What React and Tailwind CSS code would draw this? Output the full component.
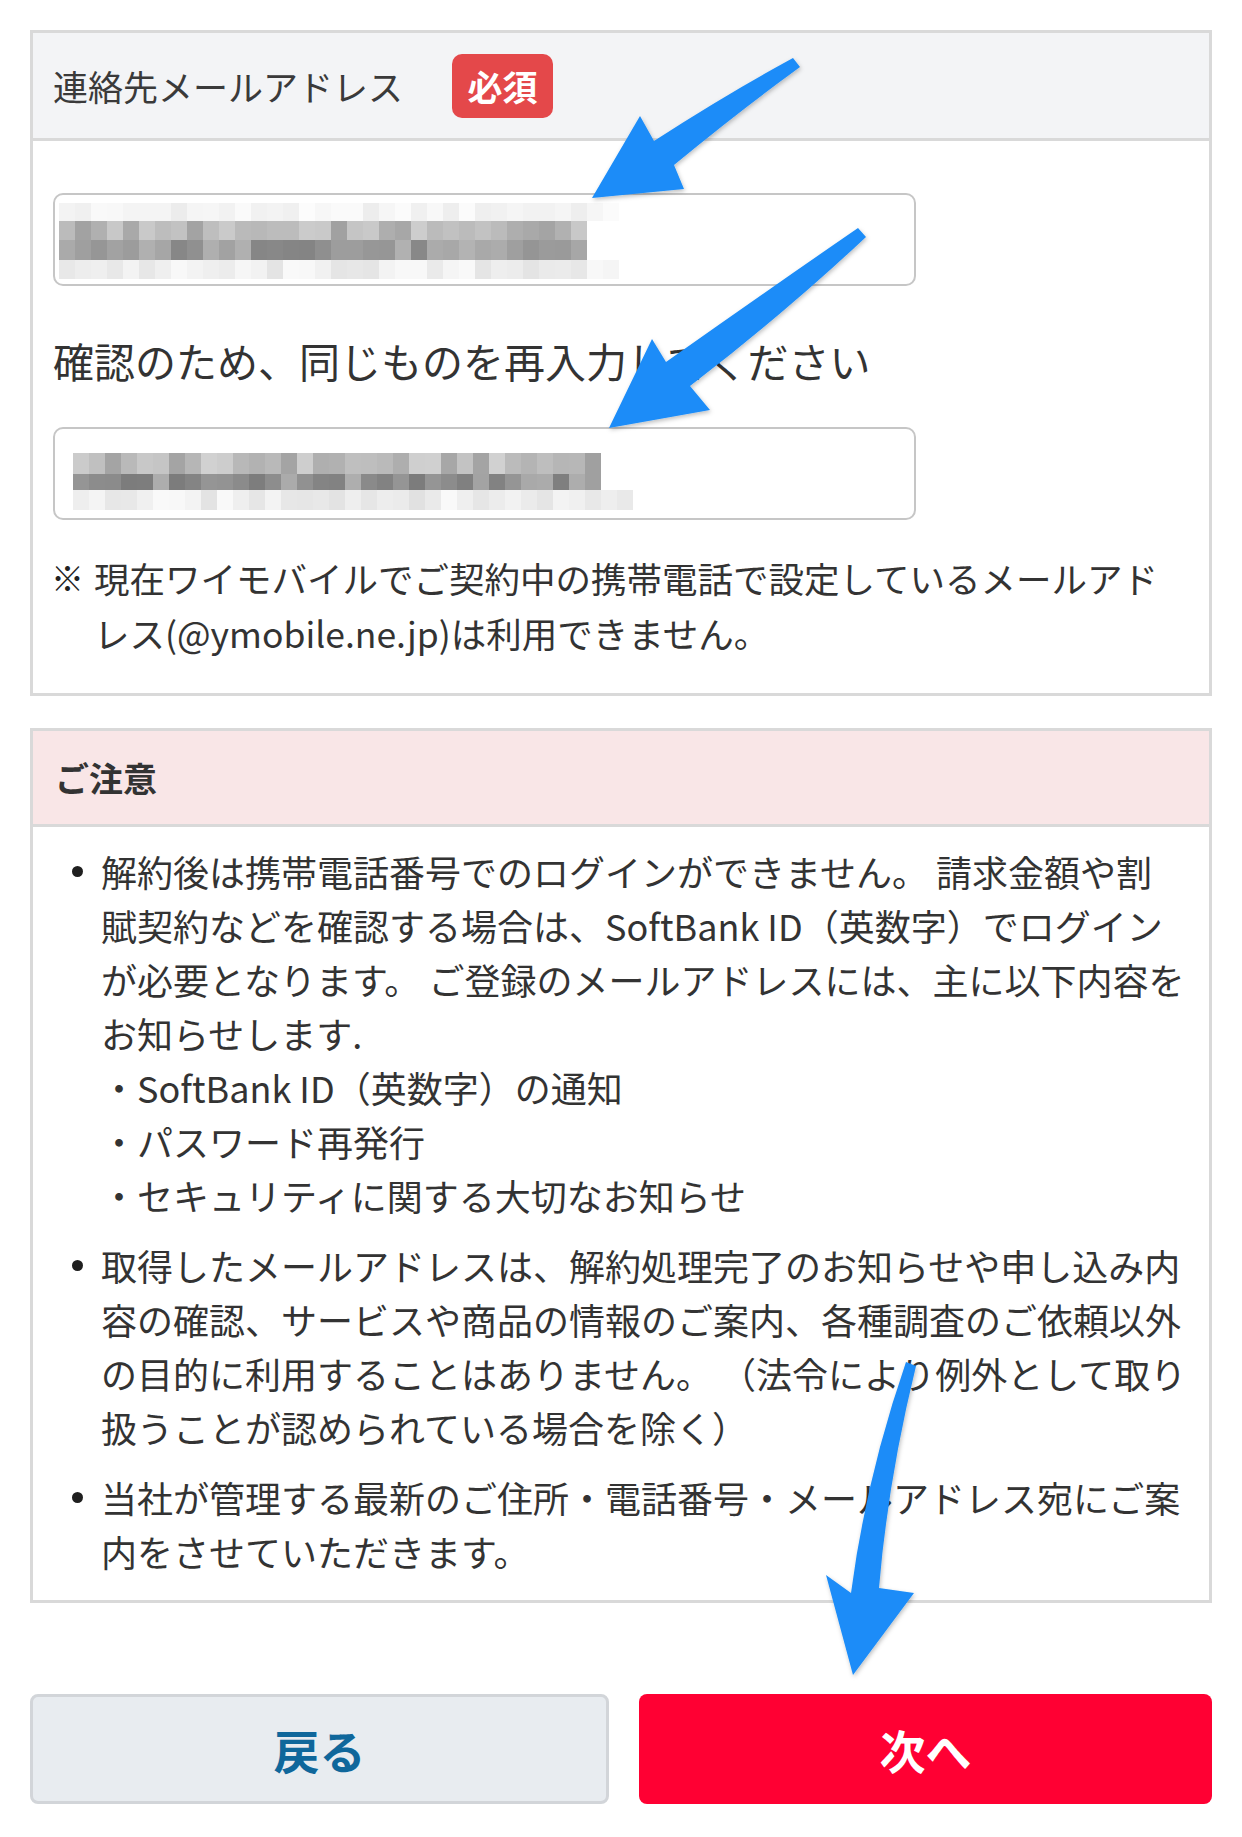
const noise = (seed) => {
  const x = Math.sin(seed * 12.9898 + 78.233) * 43758.5453;
  return x - Math.floor(x);
};

// pixelated (blurred) e-mail inside the input boxes
function MosaicInput({ rows, seed, className = "" }) {
  return (
    <div
      className={`h-[93px] w-[863px] overflow-hidden rounded-[10px] border-2 border-[#c6c6c6] bg-white ${className}`}
    >
      {rows.map((row, r) => (
        <div
          key={r}
          className="flex"
          style={{ marginLeft: row.left, marginTop: r === 0 ? row.top : 0 }}
        >
          {Array.from({ length: row.count }).map((_, c) => {
            const v = Math.round(row.min + noise(seed + r * 97 + c) * (row.max - row.min));
            return (
              <div
                key={c}
                className="w-[16px] shrink-0"
                style={{ height: row.h, backgroundColor: `rgb(${v},${v},${v})` }}
              />
            );
          })}
        </div>
      ))}
    </div>
  );
}

const firstRows = [
  { left: 4, top: 8, count: 35, min: 236, max: 252, h: 18 },
  { left: 4, count: 33, min: 160, max: 205, h: 19 },
  { left: 4, count: 33, min: 130, max: 180, h: 20 },
  { left: 4, count: 35, min: 226, max: 250, h: 19 },
];

const secondRows = [
  { left: 18, top: 24, count: 33, min: 160, max: 210, h: 21 },
  { left: 18, count: 33, min: 120, max: 175, h: 16 },
  { left: 18, count: 35, min: 225, max: 250, h: 20 },
];

const notices = [
  [
    "解約後は携帯電話番号でのログインができません。 請求金額や割",
    "賦契約などを確認する場合は、SoftBank ID（英数字）でログイン",
    "が必要となります。 ご登録のメールアドレスには、主に以下内容を",
    "お知らせします.",
    "・SoftBank ID（英数字）の通知",
    "・パスワード再発行",
    "・セキュリティに関する大切なお知らせ",
  ],
  [
    "取得したメールアドレスは、解約処理完了のお知らせや申し込み内",
    "容の確認、サービスや商品の情報のご案内、各種調査のご依頼以外",
    "の目的に利用することはありません。 （法令により例外として取り",
    "扱うことが認められている場合を除く）",
  ],
  [
    "当社が管理する最新のご住所・電話番号・メールアドレス宛にご案",
    "内をさせていただきます。",
  ],
];

function Arrows() {
  return (
    <svg
      className="pointer-events-none absolute left-0 top-0 h-[1837px] w-[1242px]"
      viewBox="0 0 1242 1837"
    >
      <defs>
        <filter id="arrowShadow" x="-20%" y="-20%" width="140%" height="140%">
          <feDropShadow dx="1" dy="2" stdDeviation="2" floodColor="#000" floodOpacity="0.25" />
        </filter>
      </defs>
      <g fill="#1b8cf8" filter="url(#arrowShadow)">
        <path d="M592 198 L640 116 L654 141 Q725 95 793 58 L800 67 Q738 112 674 165 L684 189 Z" />
        <path d="M609 428 L652 339 L666 362 Q765 292 858 228 L866 237 Q785 313 690 386 L710 410 Z" />
        <path d="M853 1675 L826 1575 L851 1593 Q866 1478 906 1362 L916 1366 Q888 1480 879 1588 L914 1593 Z" />
      </g>
    </svg>
  );
}

export default function App() {
  return (
    <div className="relative h-[1837px] w-[1242px] overflow-hidden bg-white px-[30px] pt-[30px] font-['Noto_Sans_CJK_JP','Noto_Sans',sans-serif] text-[#333]">
      <section className="border-[3px] border-[#d9d9d9]">
        <div className="flex h-[108px] items-center border-b-[3px] border-[#d9d9d9] bg-[#f3f4f6] pl-[20px]">
          <span className="text-[35px] leading-none text-[#3a3a3a]">連絡先メールアドレス</span>
          <span className="ml-[49px] flex h-[64px] w-[101px] items-center justify-center rounded-[10px] bg-[#e4484a] text-[35px] font-bold leading-none text-white">
            必須
          </span>
        </div>
        <div className="px-[20px] pb-[33px] pt-[52px]">
          <MosaicInput rows={firstRows} seed={3} />
          <p className="mt-[46px] text-[41px] leading-[56px]">確認のため、同じものを再入力してください</p>
          <MosaicInput rows={secondRows} seed={41} className="mt-[39px]" />
          <div className="mt-[30px] flex text-[35.5px] leading-[55px]">
            <span className="-ml-[2px] w-[43px] shrink-0 text-[33px] font-bold leading-[55px] text-[#222]">※</span>
            <p className="whitespace-nowrap">
              現在ワイモバイルでご契約中の携帯電話で設定しているメールアド
              <br />
              レス(@ymobile.ne.jp)は利用できません。
            </p>
          </div>
        </div>
      </section>

      <section className="mt-[32px] border-[3px] border-[#d9d9d9]">
        <div className="flex h-[96px] items-center border-b-[3px] border-[#d9d9d9] bg-[#f9e6e7] pl-[22px]">
          <h2 className="text-[34px] font-bold leading-none text-[#333]">ご注意</h2>
        </div>
        <ul className="flex flex-col gap-[16px] pb-[22px] pl-[39px] pt-[17px]">
          {notices.map((lines, i) => (
            <li key={i} className="flex">
              <span className="w-[29px] shrink-0">
                <span className="mt-[22px] block h-[11px] w-[11px] rounded-full bg-[#1f1f1f]" />
              </span>
              <p className="whitespace-nowrap text-[36px] leading-[54px]">
                {lines.map((line, j) => (
                  <span key={j} className="block">
                    {line}
                  </span>
                ))}
              </p>
            </li>
          ))}
        </ul>
      </section>

      <div className="mt-[91px] flex gap-[30px]">
        <button className="flex h-[110px] flex-1 items-center justify-center rounded-[8px] border-[3px] border-[#d2d5d9] bg-[#e8ecf0] text-[46px] font-bold text-[#0f679b]">
          戻る
        </button>
        <button className="flex h-[110px] flex-1 items-center justify-center rounded-[8px] bg-[#ff0033] text-[46px] font-bold text-white">
          次へ
        </button>
      </div>

      <Arrows />
    </div>
  );
}
